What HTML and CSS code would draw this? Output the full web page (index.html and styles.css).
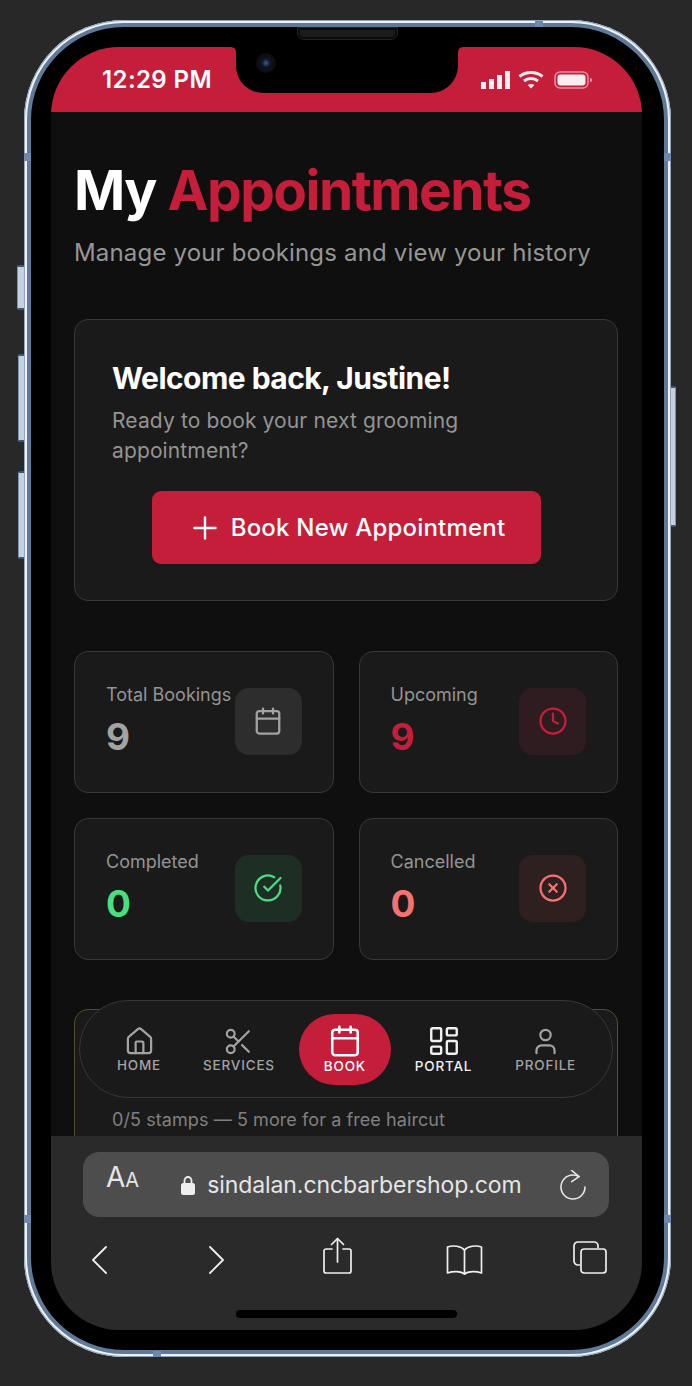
FILE: index.html
```html
<!DOCTYPE html>
<html lang="en">
<head>
    <meta charset="UTF-8">
    <meta name="viewport" content="width=device-width, initial-scale=1.0">
    <title>My Appointments</title>
    <link rel="stylesheet" href="styles.css">
</head>
<body>
    <div class="phone">
        <span class="side-btn btn-mute"></span>
        <span class="side-btn btn-up"></span>
        <span class="side-btn btn-down"></span>
        <span class="side-btn btn-power"></span>
        <span class="tick tick-top"></span>
        <span class="tick tick-bottom"></span>
        <span class="tick tick-left-a"></span>
        <span class="tick tick-left-b"></span>
        <span class="tick tick-right-a"></span>
        <span class="tick tick-right-b"></span>
        <span class="speaker"></span>

        <div class="screen">
            <svg class="notch" width="234" height="46" viewBox="0 0 234 46"><path d="M0 0C4 0 6 2 6 6V18C6 34 18 46 34 46H200C216 46 228 34 228 18V6C228 2 230 0 234 0Z" fill="#000"/></svg>
            <span class="camera"></span>

            <div class="status-bar">
                <span class="time">12:29 PM</span>
                <div class="status-icons">
                    <svg width="29" height="18" viewBox="0 0 29 18" fill="#fbeef1"><rect x="0" y="11" width="5" height="7"/><rect x="8" y="8" width="5" height="10"/><rect x="16" y="4" width="5" height="14"/><rect x="24" y="0" width="5" height="18"/></svg>
                    <svg class="wifi" width="26" height="19" viewBox="0 0 26 19" fill="none" stroke="#fbeef1" stroke-width="3"><path d="M1.5 6.5C8 1 18 1 24.5 6.5"/><path d="M6 11C10 7.8 16 7.8 20 11"/><path d="M13 18.500L9.600 15C11.600 13.500 14.400 13.500 16.400 15Z" fill="#fbeef1" stroke="none"/></svg>
                    <svg width="38" height="18" viewBox="0 0 38 18"><rect x="1" y="1" width="33" height="16" rx="5" fill="none" stroke="#e8909f" stroke-width="1.5"/><rect x="3.500" y="3.500" width="28" height="11" rx="3" fill="#fbeef1"/><path d="M36 6.500C37.400 7 38 8 38 9C38 10 37.400 11 36 11.500Z" fill="#e8909f"/></svg>
                </div>
            </div>

            <main class="content">
                <h1 class="page-title">My <span class="accent">Appointments</span></h1>
                <p class="page-sub">Manage your bookings and view your history</p>

                <section class="welcome-card">
                    <h2>Welcome back, Justine!</h2>
                    <p>Ready to book your next grooming appointment?</p>
                    <a class="book-btn">
                        <svg width="36" height="36" viewBox="0 0 24 24" fill="none" stroke="#fff" stroke-width="1.6" stroke-linecap="round"><path d="M5 12h14"/><path d="M12 5v14"/></svg>
                        Book New Appointment
                    </a>
                </section>

                <section class="stats">
                    <div class="stat-card">
                        <div>
                            <div class="stat-label">Total Bookings</div>
                            <div class="stat-value grey">9</div>
                        </div>
                        <div class="stat-icon bg-grey">
                            <svg width="30" height="30" viewBox="0 0 24 24" fill="none" stroke="#a3a3a3" stroke-width="1.8" stroke-linecap="round" stroke-linejoin="round"><path d="M8 2v4"/><path d="M16 2v4"/><rect width="18" height="18" x="3" y="4" rx="2"/><path d="M3 10h18"/></svg>
                        </div>
                    </div>
                    <div class="stat-card">
                        <div>
                            <div class="stat-label">Upcoming</div>
                            <div class="stat-value red">9</div>
                        </div>
                        <div class="stat-icon bg-red">
                            <svg width="30" height="30" viewBox="0 0 24 24" fill="none" stroke="#c41e3a" stroke-width="1.8" stroke-linecap="round" stroke-linejoin="round"><circle cx="12" cy="12" r="10"/><polyline points="12 6 12 12 16 14"/></svg>
                        </div>
                    </div>
                    <div class="stat-card">
                        <div>
                            <div class="stat-label">Completed</div>
                            <div class="stat-value green">0</div>
                        </div>
                        <div class="stat-icon bg-green">
                            <svg width="30" height="30" viewBox="0 0 24 24" fill="none" stroke="#4ade80" stroke-width="1.8" stroke-linecap="round" stroke-linejoin="round"><path d="M21.801 10A10 10 0 1 1 17 3.335"/><path d="m9 11 3 3L22 4"/></svg>
                        </div>
                    </div>
                    <div class="stat-card">
                        <div>
                            <div class="stat-label">Cancelled</div>
                            <div class="stat-value salmon">0</div>
                        </div>
                        <div class="stat-icon bg-salmon">
                            <svg width="30" height="30" viewBox="0 0 24 24" fill="none" stroke="#f87171" stroke-width="1.8" stroke-linecap="round" stroke-linejoin="round"><circle cx="12" cy="12" r="10"/><path d="m15 9-6 6"/><path d="m9 9 6 6"/></svg>
                        </div>
                    </div>
                </section>

                <section class="loyalty-card">
                    <p>0/5 stamps — 5 more for a free haircut</p>
                </section>
            </main>

            <nav class="bottom-nav">
                <a class="nav-item nav-home">
                    <svg width="31" height="31" viewBox="0 0 24 24" fill="none" stroke="#a3a3a3" stroke-width="1.7" stroke-linecap="round" stroke-linejoin="round"><path d="M15 21v-8a1 1 0 0 0-1-1h-4a1 1 0 0 0-1 1v8"/><path d="M3 10a2 2 0 0 1 .709-1.528l7-5.999a2 2 0 0 1 2.582 0l7 5.999A2 2 0 0 1 21 10v9a2 2 0 0 1-2 2H5a2 2 0 0 1-2-2z"/></svg>
                    HOME
                </a>
                <a class="nav-item">
                    <svg width="31" height="31" viewBox="0 0 24 24" fill="none" stroke="#a3a3a3" stroke-width="1.7" stroke-linecap="round" stroke-linejoin="round"><circle cx="6" cy="6" r="3"/><path d="M8.120 8.120 12 12"/><path d="M20 4 8.120 15.880"/><circle cx="6" cy="18" r="3"/><path d="M14.800 14.800 20 20"/></svg>
                    SERVICES
                </a>
                <a class="nav-item active">
                    <svg width="34" height="34" viewBox="0 0 24 24" fill="none" stroke="#fff" stroke-width="1.8" stroke-linecap="round" stroke-linejoin="round"><path d="M8 2v4"/><path d="M16 2v4"/><rect width="18" height="18" x="3" y="4" rx="2"/><path d="M3 10h18"/></svg>
                    BOOK
                </a>
                <a class="nav-item portal">
                    <svg width="34" height="34" viewBox="0 0 24 24" fill="none" stroke="#f0f0f0" stroke-width="1.7" stroke-linecap="round" stroke-linejoin="round"><rect width="7" height="9" x="3" y="3" rx="1"/><rect width="7" height="5" x="14" y="3" rx="1"/><rect width="7" height="9" x="14" y="12" rx="1"/><rect width="7" height="5" x="3" y="16" rx="1"/></svg>
                    PORTAL
                </a>
                <a class="nav-item nav-profile">
                    <svg width="31" height="31" viewBox="0 0 24 24" fill="none" stroke="#a3a3a3" stroke-width="1.7" stroke-linecap="round" stroke-linejoin="round"><path d="M19 21v-2a4 4 0 0 0-4-4H9a4 4 0 0 0-4 4v2"/><circle cx="12" cy="7" r="4"/></svg>
                    PROFILE
                </a>
            </nav>

            <div class="browser-bar">
                <div class="url-bar">
                    <span class="aa">A<small>A</small></span>
                    <div class="url">
                        <svg width="14" height="20" viewBox="0 0 14 20"><path d="M3.500 9V5.500a3.500 3.500 0 0 1 7 0V9" fill="none" stroke="#eee" stroke-width="1.8"/><rect x="0" y="8" width="14" height="12" rx="2.500" fill="#eee"/></svg>
                        <span>sindalan.cncbarbershop.com</span>
                    </div>
                    <svg class="reload" width="26" height="30" viewBox="0 0 26 30" fill="none" stroke="#e6e6e6" stroke-width="1.6" stroke-linecap="round" stroke-linejoin="round"><path d="M19 6.500C17 5.600 15 5 13 5A12 12 0 1 0 25 17"/><path d="M11.700 0.500L19 6.700 11.700 11.700"/></svg>
                </div>
                <div class="toolbar">
                    <svg class="tb-back" width="17" height="30" viewBox="0 0 17 30" fill="none" stroke="#eee" stroke-width="1.8" stroke-linecap="round" stroke-linejoin="round"><path d="M15 2L2 15l13 13"/></svg>
                    <svg class="tb-forward" width="17" height="30" viewBox="0 0 17 30" fill="none" stroke="#eee" stroke-width="1.8" stroke-linecap="round" stroke-linejoin="round"><path d="M2 2l13 13L2 28"/></svg>
                    <svg class="tb-share" width="29" height="38" viewBox="0 0 29 38" fill="none" stroke="#eee" stroke-width="1.7" stroke-linecap="round" stroke-linejoin="round"><path d="M9 12H3a2 2 0 0 0-2 2v20a2 2 0 0 0 2 2h23a2 2 0 0 0 2-2V14a2 2 0 0 0-2-2h-6"/><path d="M14.500 25V2"/><path d="M8.500 7.500L14.500 1.500l6 6"/></svg>
                    <svg class="tb-book" width="37" height="31" viewBox="0 0 37 31" fill="none" stroke="#eee" stroke-width="1.7" stroke-linejoin="round"><path d="M18.500 6C15 2 7 1 1.500 3V29C7 27 15 27 18.500 30C22 27 30 27 35.500 29V3C30 1 22 2 18.500 6Z"/><path d="M18.500 6V30"/></svg>
                    <svg class="tb-tabs" width="34" height="33" viewBox="0 0 34 33" fill="none" stroke="#eee" stroke-width="1.7"><path d="M7 24H5a4 4 0 0 1-4-4V5a4 4 0 0 1 4-4h16a4 4 0 0 1 4 4v2"/><rect x="8" y="8" width="25" height="24" rx="3"/></svg>
                </div>
                <div class="home-indicator"></div>
            </div>
        </div>
    </div>
</body>
</html>
```

FILE: styles.css
```css
* {
    box-sizing: border-box;
}
body {
    margin: 0;
    width: 692px;
    height: 1386px;
    overflow: hidden;
    background-color: #282828;
    font-family: 'Inter', 'Liberation Sans', sans-serif;
    padding: 20px 0 0 24px;
}
.phone {
    position: relative;
    width: 647px;
    height: 1337px;
    padding: 27px 29px 27px 27px;
    border-radius: 100px;
    background-color: #000;
    box-shadow: inset 0 0 0 1px #8fa3bb, inset 0 0 0 3px #eef2f7, inset 0 0 0 7px #5f7a99;
}
.side-btn {
    position: absolute;
    width: 6px;
    left: -6px;
    background-color: #c5d1e2;
    border-left: 1px solid #7d92ad;
    border-top: 2px solid #465468;
    border-bottom: 2px solid #465468;
    border-radius: 2px 0 0 2px;
}
.btn-mute {
    top: 245px;
    height: 45px;
    left: -7px;
    width: 7px;
}
.btn-up {
    top: 334px;
    height: 88px;
}
.btn-down {
    top: 451px;
    height: 88px;
}
.btn-power {
    left: auto;
    right: -5px;
    width: 5px;
    top: 366px;
    height: 141px;
    border-left: 0;
    border-right: 1px solid #7d92ad;
    border-radius: 0 2px 2px 0;
}
.tick {
    position: absolute;
    background-color: #6f88ad;
}
.tick-top {
    top: 1px;
    left: 511px;
    width: 8px;
    height: 6px;
}
.tick-bottom {
    bottom: 0;
    left: 129px;
    width: 8px;
    height: 6px;
}
.tick-left-a, .tick-left-b, .tick-right-a, .tick-right-b {
    width: 7px;
    height: 8px;
}
.tick-left-a {
    left: 0;
    top: 133px;
}
.tick-left-b {
    left: 0;
    top: 1195px;
}
.tick-right-a {
    right: 0;
    top: 133px;
}
.tick-right-b {
    right: 0;
    top: 1195px;
}
.speaker {
    position: absolute;
    top: 8px;
    left: 274px;
    width: 99px;
    height: 11px;
    border-radius: 0 0 6px 6px;
    background-color: #1c1c1c;
    border: 2px solid #0c0c0c;
    outline: 1px solid #222;
}
.screen {
    position: relative;
    height: 100%;
    border-radius: 68px;
    overflow: hidden;
    background-color: #0f0f0f;
}
.notch {
    position: absolute;
    top: 0;
    left: 179px;
}
.camera {
    position: absolute;
    top: 6px;
    left: 205px;
    width: 20px;
    height: 20px;
    border-radius: 50%;
    background: radial-gradient(circle, #3a5c90 0, #0b1524 30%, #0d0d10 60%);
}
.status-bar {
    height: 65px;
    background-color: #c41e3a;
    display: flex;
    align-items: center;
    justify-content: space-between;
    padding: 0 50px 0 51px;
    color: #fff;
}
.time {
    font-size: 24px;
    font-weight: 600;
    letter-spacing: 0.4px;
}
.status-icons {
    display: flex;
    align-items: center;
    gap: 8px;
}
.wifi {
    margin-right: 2px;
}
.content {
    height: 1024px;
    overflow: hidden;
    padding: 44px 24px 0 23px;
    background-color: #0f0f0f;
}
.page-title {
    margin: 0;
    font-size: 55px;
    line-height: 68px;
    font-weight: 700;
    letter-spacing: -1.5px;
    color: #fff;
}
.accent {
    color: #c41e3a;
}
.page-sub {
    margin: 13px 0 0 0;
    font-size: 24px;
    line-height: 32px;
    letter-spacing: 0.17px;
    color: #969696;
}
.welcome-card {
    margin-top: 50px;
    height: 282px;
    padding: 38px 37px 0 37px;
    border: 1px solid #383838;
    border-radius: 14px;
    background-color: #1a1a1a;
}
.welcome-card h2 {
    margin: 0;
    font-size: 30px;
    line-height: 40px;
    font-weight: 700;
    letter-spacing: -0.55px;
    color: #fff;
}
.welcome-card p {
    margin: 8px 0 0 0;
    font-size: 21px;
    line-height: 30px;
    letter-spacing: 0.13px;
    color: #949494;
}
.book-btn {
    display: flex;
    align-items: center;
    justify-content: center;
    gap: 8px;
    width: 389px;
    height: 73px;
    margin: 25px auto 0 auto;
    border-radius: 9px;
    background-color: #c41e3a;
    color: #fff;
    font-size: 24px;
    font-weight: 500;
    letter-spacing: 0.2px;
}
.stats {
    margin-top: 50px;
    display: grid;
    grid-template-columns: 1fr 1fr;
    gap: 25px;
}
.stat-card {
    height: 142px;
    padding: 0 31px 0 31px;
    display: flex;
    align-items: center;
    justify-content: space-between;
    border: 1px solid #383838;
    border-radius: 14px;
    background-color: #1a1a1a;
}
.stat-label {
    font-size: 18px;
    line-height: 26px;
    color: #949494;
    white-space: nowrap;
}
.stat-value {
    margin-top: 6px;
    margin-bottom: 2px;
    font-size: 37px;
    line-height: 46px;
    font-weight: 700;
}
.stat-icon {
    flex-shrink: 0;
    width: 67px;
    height: 67px;
    margin-bottom: 2px;
    border-radius: 14px;
    display: flex;
    align-items: center;
    justify-content: center;
}
.grey {
    color: #a3a3a3;
}
.red {
    color: #c41e3a;
}
.green {
    color: #4ade80;
}
.salmon {
    color: #f87171;
}
.bg-grey {
    background-color: #2d2d2d;
}
.bg-red {
    background-color: #2e1c20;
}
.bg-green {
    background-color: #1d2f24;
}
.bg-salmon {
    background-color: #2f2020;
}
.loyalty-card {
    margin-top: 49px;
    height: 200px;
    padding: 97px 37px 0 37px;
    border: 1px solid #574d2a;
    border-radius: 14px;
    background-color: #1a1a1a;
}
.loyalty-card p {
    margin: 0;
    font-size: 18px;
    line-height: 26px;
    letter-spacing: 0.08px;
    color: #808080;
}
.bottom-nav {
    position: absolute;
    left: 28px;
    top: 953px;
    width: 534px;
    height: 98px;
    padding-left: 37px;
    display: flex;
    align-items: center;
    gap: 24px;
    border: 1px solid #383838;
    border-radius: 49px;
    background-color: #1a1a1a;
}
.nav-item {
    display: flex;
    flex-direction: column;
    align-items: center;
    font-size: 13.5px;
    line-height: 16px;
    font-weight: 500;
    letter-spacing: 0.8px;
    color: #a3a3a3;
}
.nav-home {
    margin-right: 18px;
}
.nav-profile {
    margin-left: 19px;
}
.nav-item.active {
    width: 92px;
    height: 71px;
    justify-content: center;
    border-radius: 36px;
    background-color: #c41e3a;
    color: #fff;
}
.nav-item.portal {
    color: #f0f0f0;
}
.browser-bar {
    height: 194px;
    padding-top: 16px;
    background-color: #2a2a2a;
}
.url-bar {
    margin-left: 32px;
    width: 526px;
    height: 65px;
    padding: 0 23px 0 23px;
    display: flex;
    align-items: center;
    border-radius: 16px;
    background-color: #4d4d4d;
    color: #e6e6e6;
}
.aa {
    font-size: 28px;
    line-height: 50px;
    align-self: flex-start;
}
.aa small {
    font-size: 20px;
}
.url {
    display: flex;
    align-items: center;
    gap: 12px;
    margin-left: 42px;
    font-size: 23px;
    letter-spacing: -0.08px;
}
.reload {
    margin-left: auto;
}
.toolbar {
    margin-top: 18px;
    height: 40px;
    padding-left: 40px;
    display: flex;
    align-items: flex-end;
}
.tb-forward {
    margin-left: 100px;
}
.tb-share {
    margin-left: 98px;
}
.tb-book {
    margin-left: 94px;
}
.tb-tabs {
    margin-left: 90px;
    margin-bottom: 1px;
}
.home-indicator {
    width: 221px;
    height: 8px;
    margin: 35px 0 0 185px;
    border-radius: 4px;
    background-color: #000;
}
```
